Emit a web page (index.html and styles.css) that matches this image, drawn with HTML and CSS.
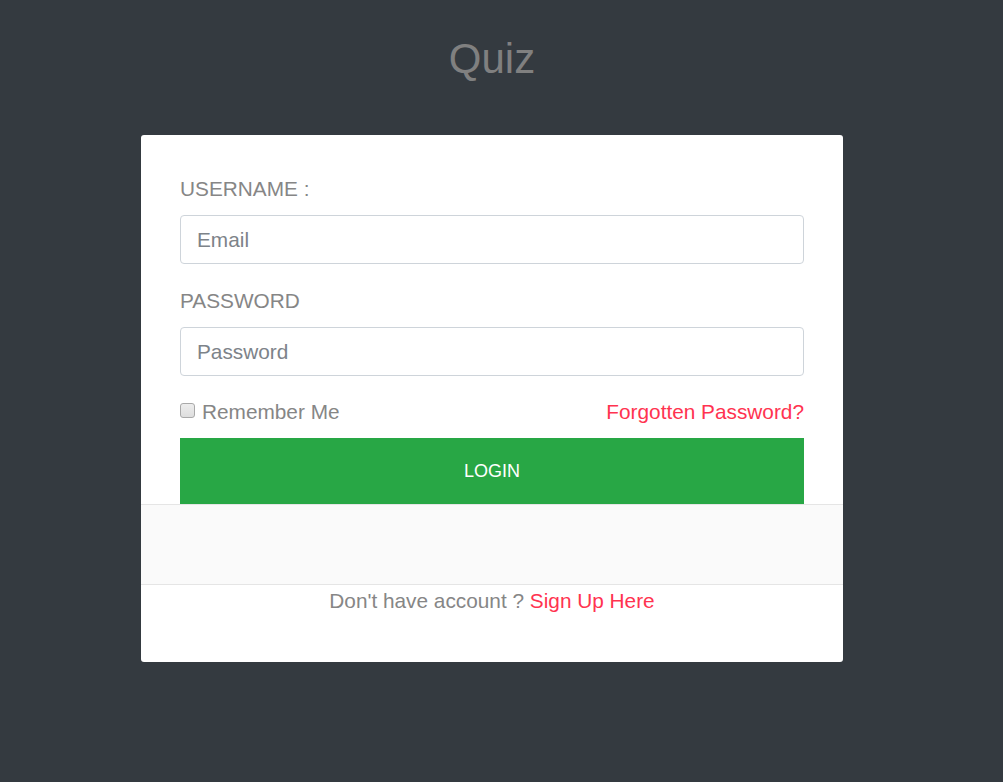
FILE: index.html
```html
<!DOCTYPE html>
<html lang="en">
<head>
<meta charset="utf-8">
<title>Quiz</title>
<link rel="stylesheet" href="styles.css">
</head>
<body>
<div class="page">
  <h1 class="title">Quiz</h1>
  <div class="card">
    <form class="card-body">
      <label class="field-label" for="email">USERNAME :</label>
      <input class="field-input" id="email" type="text" placeholder="Email">
      <label class="field-label field-label-2" for="password">PASSWORD</label>
      <input class="field-input" id="password" type="password" placeholder="Password">
      <div class="options-row">
        <label class="remember"><input type="checkbox" class="remember-box"> Remember Me</label>
        <a class="link-red" href="#">Forgotten Password?</a>
      </div>
      <button class="btn-login" type="button">LOGIN</button>
    </form>
    <div class="card-band"></div>
    <p class="signup">Don't have account ? <a class="link-red" href="#">Sign Up Here</a></p>
  </div>
</div>
</body>
</html>
```

FILE: styles.css
```css
html, body {
  margin: 0;
  padding: 0;
  background: #343a40;
  font-family: "Liberation Sans", Arial, sans-serif;
}

.page {
  width: 984px;
  display: flex;
  flex-direction: column;
  align-items: center;
}

.title {
  margin: 34px 0 0;
  font-size: 42px;
  line-height: 50px;
  font-weight: 400;
  color: #808080;
}

.card {
  margin-top: 51px;
  width: 702px;
  background: #fff;
  border-radius: 3px;
  height: 527px;
  box-sizing: border-box;
}

.card-body {
  padding: 38px 39px 0;
  display: flex;
  flex-direction: column;
  margin: 0;
}

.field-label {
  display: block;
  font-size: 20.8px;
  line-height: 31px;
  color: #868686;
  margin-bottom: 11px;
}

.field-label-2 {
  margin-top: 21px;
}

.field-input {
  box-sizing: border-box;
  width: 100%;
  height: 49px;
  padding: 8px 16px;
  font-family: "Liberation Sans", Arial, sans-serif;
  font-size: 20.8px;
  color: #495057;
  border: 1px solid #ced4da;
  border-radius: 4px;
  outline: none;
  background: #fff;
}

.field-input::placeholder {
  color: #7d8389;
  opacity: 1;
}

.options-row {
  display: flex;
  justify-content: space-between;
  align-items: center;
  margin-top: 20px;
  height: 31px;
  font-size: 20.8px;
  line-height: 31px;
}

.remember {
  display: flex;
  align-items: center;
  color: #868686;
}

.remember-box {
  -webkit-appearance: none;
  appearance: none;
  box-sizing: border-box;
  width: 15px;
  height: 15px;
  margin: 0 7px 2px 0;
  border: 1px solid #a9a9a9;
  border-radius: 3px;
  background: linear-gradient(#ededed, #dedede);
}

.link-red {
  color: #ff3350;
  text-decoration: none;
}

.btn-login {
  margin-top: 11px;
  height: 66px;
  border: none;
  border-radius: 0;
  background: #28a745;
  color: #fff;
  font-family: "Liberation Sans", Arial, sans-serif;
  font-size: 18px;
  cursor: pointer;
}

.card-band {
  height: 79px;
  background: #fafafa;
  border-top: 1px solid #e5e5e5;
  border-bottom: 1px solid #e5e5e5;
}

.signup {
  margin: 0;
  text-align: center;
  font-size: 20.8px;
  line-height: 31px;
  color: #868686;
}
```
